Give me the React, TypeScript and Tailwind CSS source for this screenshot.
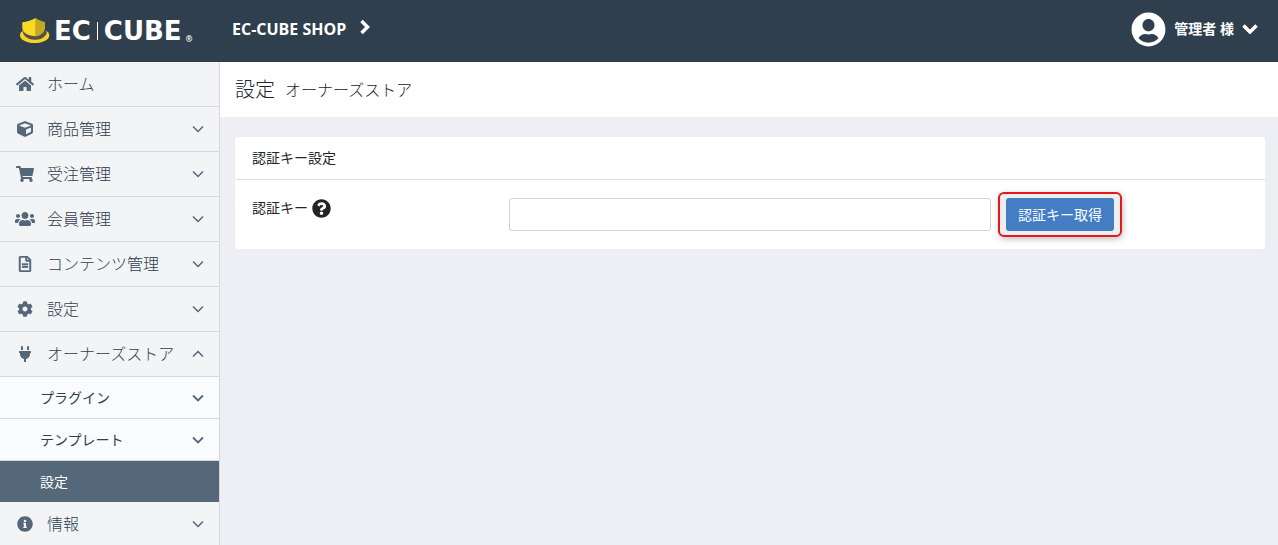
import type { ReactNode } from 'react';
import {
  FaHome,
  FaCube,
  FaShoppingCart,
  FaUsers,
  FaRegFileAlt,
  FaCog,
  FaPlug,
  FaInfoCircle,
  FaQuestionCircle,
  FaUserCircle,
} from 'react-icons/fa';

type Item = { label: string; icon: ReactNode; leaf?: boolean; open?: boolean };

const items: Item[] = [
  { label: 'ホーム', icon: <FaHome size={18} />, leaf: true },
  { label: '商品管理', icon: <FaCube size={16} /> },
  { label: '受注管理', icon: <FaShoppingCart size={18} /> },
  { label: '会員管理', icon: <FaUsers size={20} /> },
  { label: 'コンテンツ管理', icon: <FaRegFileAlt size={16} strokeWidth={14} /> },
  { label: '設定', icon: <FaCog size={16} /> },
  { label: 'オーナーズストア', icon: <FaPlug size={16} />, open: true },
  { label: '情報', icon: <FaInfoCircle size={16} /> },
];

function Angle({ up = false, bold = false }: { up?: boolean; bold?: boolean }) {
  return (
    <svg width="12" height="8" viewBox="0 0 12 8" fill="none" stroke="#54687a" strokeWidth={bold ? 1.8 : 1.5} aria-hidden="true">
      <path d={up ? 'M1 6.5 6 1.5l5 5' : 'M1 1.5l5 5 5-5'} />
    </svg>
  );
}

function Logo() {
  return (
    <a href="#top" aria-label="EC-CUBE" className="flex h-full w-[220px] shrink-0 items-center pl-5 text-white">
      <svg width="30" height="26" viewBox="0 0 30 26" aria-hidden="true">
        <path d="M3.600 12.800C1.200 13.800 0 15.300 0 17.200c0 4.600 6.500 7.800 14.700 7.800S29.300 21.800 29.300 17.200c0-1.900-1.200-3.400-3.600-4.400l-2 5C21.500 20 18.500 21 14.700 21S8 20 5.600 17.800Z" fill="#f5d422" />
        <path d="M3.200 12.500c-.5 1.500-.2 3 .8 4.500 2 3 6 4.800 11 4.800s8.800-1.800 10.800-4.800c1-1.500 1.200-3 .7-4.500l-4 3.500-7.500 3-8-3Z" fill="#574c51" />
        <path d="M2.300 4.200C7 3.800 11.500 2.300 15.800 0v18.500C8 17.500 2.300 15 2.300 10Z" fill="#f9d923" />
        <path d="M15.800 0c3 2 6 3.400 9.200 4V10c0 4.500-4 7.500-9.200 8.500Z" fill="#c4a81d" />
      </svg>
      <span className="ml-1 flex items-center font-['DejaVu_Sans'] text-[26px] leading-none font-bold">
        <span>EC</span>
        <span className="mr-1.5 ml-1.5 h-[18px] w-px bg-white" />
        <span>CUBE</span>
      </span>
      <span className="ml-1 pt-4 text-[8px] leading-none">®</span>
    </a>
  );
}

function SubMenu() {
  return (
    <ul className="text-sm font-normal">
      {['プラグイン', 'テンプレート'].map((label) => (
        <li key={label}>
          <button type="button" className="flex h-[42px] w-full items-center justify-between border-b border-[#d4d8dd] bg-[#fafbfd] pr-[15px] pl-10">
            {label}
            <Angle bold />
          </button>
        </li>
      ))}
      <li>
        <a href="#settings" aria-current="page" className="flex h-[41px] items-center bg-[#54687a] pl-10 text-white">
          設定
        </a>
      </li>
    </ul>
  );
}

function Row({ item }: { item: Item }) {
  const content = (
    <>
      <span className="flex w-5 justify-center text-[#54687a]">{item.icon}</span>
      <span className="ml-3 flex-1 text-left">{item.label}</span>
      {!item.leaf && <Angle up={item.open} />}
    </>
  );
  return (
    <li>
      {item.leaf ? (
        <a href="#home" className="flex h-[45px] items-center border-b border-[#d4d8dd] pr-[15px] pl-[15px]">{content}</a>
      ) : (
        <button type="button" aria-expanded={!!item.open} className="flex h-[45px] w-full items-center border-b border-[#d4d8dd] pr-[15px] pl-[15px]">
          {content}
        </button>
      )}
      {item.open && <SubMenu />}
    </li>
  );
}

export default function App() {
  return (
    <div className="flex h-screen flex-col overflow-hidden bg-[#eeeff4] font-['Open_Sans','Noto_Sans_CJK_JP',sans-serif] text-[#212529]">
      <header className="flex h-[62px] shrink-0 items-center bg-[#303f4e] text-sm font-bold text-white">
        <Logo />
        <a href="#shop" className="flex items-center gap-3.5 pb-1 pl-3">
          <span className="text-base">EC-CUBE SHOP</span>
          <svg width="10" height="16" viewBox="0 0 10 16" className="-mt-1" fill="none" stroke="currentColor" strokeWidth="3.5" aria-hidden="true">
            <path d="M1.5 2l6 6-6 6" />
          </svg>
        </a>
        <button type="button" className="mr-5 ml-auto flex items-center gap-2 pb-1">
          <FaUserCircle size={35} />
          <span>管理者 様</span>
          <svg width="16" height="10" viewBox="0 0 16 10" fill="none" stroke="currentColor" strokeWidth="3.5" aria-hidden="true">
            <path d="M1.5 1.5 8 8l6.500-6.500" />
          </svg>
        </button>
      </header>
      <div className="flex min-h-0 flex-1">
        <nav className="w-[220px] shrink-0 border-r border-[#d4d8dd] bg-[#f3f4f6] font-light text-[#303f4e]">
          <ul>
            {items.map((item) => (
              <Row key={item.label} item={item} />
            ))}
          </ul>
        </nav>
        <main className="min-w-0 flex-1">
          <div className="flex h-[55px] items-center gap-2.5 bg-white px-[15px] font-light">
            <h1 className="text-xl font-light">設定</h1>
            <span className="text-base">オーナーズストア</span>
          </div>
          <section className="mt-5 mr-[13px] ml-[15px] rounded-[3px] bg-white text-sm">
            <h2 className="flex h-[43px] items-center border-b border-[#dcdee0] px-[17px]">認証キー設定</h2>
            <div className="flex px-[17px] py-[18px]">
              <label htmlFor="auth-key" className="flex w-1/4 shrink-0 items-center gap-1 self-start">
                認証キー
                <FaQuestionCircle size={19} />
              </label>
              <div className="flex flex-1 items-center pl-2">
                <input id="auth-key" type="text" className="h-[33px] w-[482px] min-w-0 rounded-[3px] border border-[#ced4da] bg-white px-3" />
                <span className="-my-1.5 ml-[7px] shrink-0 rounded-md border-2 border-[#e5161c] bg-[#eeeeee] px-1.5 py-1 shadow-[1px_2px_6px_rgba(0,0,0,0.25)]">
                  <button type="button" className="flex h-[33px] items-center rounded-[3px] bg-[#437ec4] px-3 whitespace-nowrap text-white">
                    認証キー取得
                  </button>
                </span>
              </div>
            </div>
          </section>
        </main>
      </div>
    </div>
  );
}
